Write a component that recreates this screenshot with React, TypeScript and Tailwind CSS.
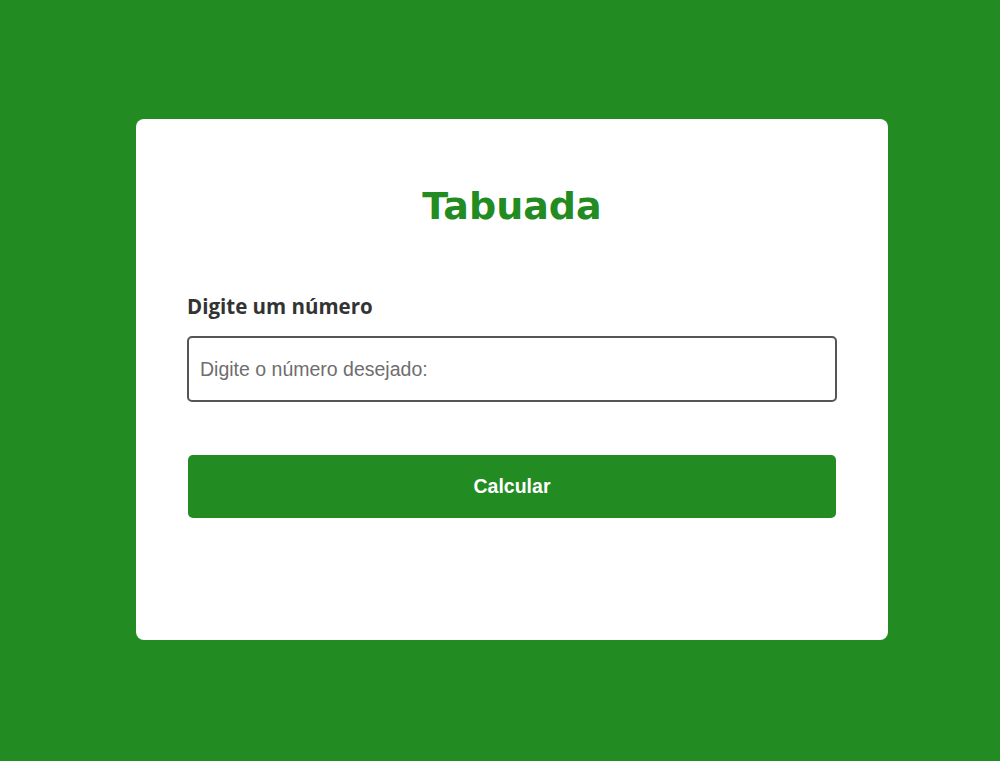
export default function App() {
  return (
    <div className="flex h-[761px] w-full justify-center bg-[#228b22] pl-[24px] pt-[119px]">
      <div className="flex h-[521px] w-[752px] flex-col rounded-[8px] bg-white px-[51px] pt-[64px]">
        <h1 className="text-center font-['DejaVu_Sans',sans-serif] text-[38px] font-bold leading-[46px] text-[#228b22]">
          Tabuada
        </h1>
        <label
          htmlFor="numero"
          className="mt-[65px] font-['Open_Sans',sans-serif] text-[20.5px] font-bold leading-[24px] text-[#333333]"
        >
          Digite um número
        </label>
        <input
          id="numero"
          type="number"
          placeholder="Digite o número desejado:"
          className="mt-[18px] h-[66px] w-full rounded-[5px] border-2 border-[#555555] px-[11px] font-['Liberation_Sans',sans-serif] text-[19.5px] text-[#333] outline-none placeholder:text-[#6e6e6e]"
        />
        <button
          type="button"
          className="mx-[1px] mt-[53px] h-[63px] w-[648px] rounded-[5px] bg-[#228b22] font-['Liberation_Sans',sans-serif] text-[19.5px] font-bold text-white"
        >
          Calcular
        </button>
      </div>
    </div>
  )
}
